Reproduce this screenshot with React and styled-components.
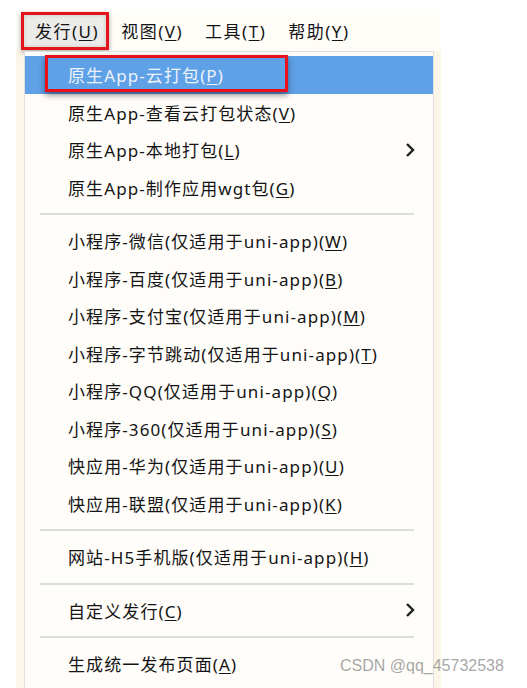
import styled, { createGlobalStyle } from "styled-components";

const GlobalStyle = createGlobalStyle`
  html, body {
    margin: 0;
    padding: 0;
    background: #ffffff;
  }
  body {
    font-family: "Noto Sans", "Noto Sans CJK SC", sans-serif;
  }
`;

const topMenus = [
  { label: "发行", key: "U", active: true },
  { label: "视图", key: "V" },
  { label: "工具", key: "T" },
  { label: "帮助", key: "Y" },
];

const groups = [
  [
    { label: "原生App-云打包", key: "P", selected: true },
    { label: "原生App-查看云打包状态", key: "V" },
    { label: "原生App-本地打包", key: "L", sub: true },
    { label: "原生App-制作应用wgt包", key: "G" },
  ],
  [
    { label: "小程序-微信(仅适用于uni-app)", key: "W" },
    { label: "小程序-百度(仅适用于uni-app)", key: "B" },
    { label: "小程序-支付宝(仅适用于uni-app)", key: "M" },
    { label: "小程序-字节跳动(仅适用于uni-app)", key: "T" },
    { label: "小程序-QQ(仅适用于uni-app)", key: "Q" },
    { label: "小程序-360(仅适用于uni-app)", key: "S" },
    { label: "快应用-华为(仅适用于uni-app)", key: "U" },
    { label: "快应用-联盟(仅适用于uni-app)", key: "K" },
  ],
  [{ label: "网站-H5手机版(仅适用于uni-app)", key: "H" }],
  [{ label: "自定义发行", key: "C", sub: true }],
  [{ label: "生成统一发布页面", key: "A" }],
];

const Chevron = () => (
  <svg width="10" height="16" viewBox="0 0 10 16">
    <polyline points="2,2 8,8 2,14" fill="none" stroke="#1e1e1e" strokeWidth="2.4" />
  </svg>
);

const App = () => {
  return (
    <>
      <GlobalStyle />
      <Page>
        <Frame>
          <MenuBar>
            {topMenus.map((m) => (
              <TopItem key={m.label} $active={m.active}>
                {m.label}(<u>{m.key}</u>)
              </TopItem>
            ))}
          </MenuBar>
          <Dropdown>
            {groups.map((group, gi) => (
              <Group key={gi}>
                {gi > 0 && <Separator />}
                {group.map((item) => (
                  <Item key={item.label} $selected={item.selected}>
                    <span>
                      {item.label}(<u>{item.key}</u>)
                    </span>
                    {item.sub && (
                      <Arrow>
                        <Chevron />
                      </Arrow>
                    )}
                    {item.selected && <Callout />}
                  </Item>
                ))}
              </Group>
            ))}
          </Dropdown>
        </Frame>
        <Watermark>CSDN @qq_45732538</Watermark>
      </Page>
    </>
  );
};

const Page = styled.div`
  position: relative;
  width: 527px;
  height: 688px;
  overflow: hidden;
  padding: 10px 0 0 16px;
  box-sizing: border-box;
`;

const Frame = styled.div`
  width: 425px;
  height: 700px;
  background: #fcf6e8;
  display: flex;
  flex-direction: column;
`;

const MenuBar = styled.div`
  height: 41px;
  background: #fffdf8;
  display: flex;
  align-items: center;
  padding-left: 5px;
  box-sizing: border-box;
`;

const TopItem = styled.div`
  font-size: 17px;
  letter-spacing: 1.5px;
  line-height: 31px;
  color: #141414;
  padding: 1px 7px 0 9px;
  border: 3px solid transparent;
  u {
    text-underline-offset: 2px;
  }
  ${(p) =>
    p.$active &&
    `
    padding: 1px 7px 0 11px;
    border-color: #e5141c;
    background: #ebebea;
    box-shadow: 0 2px 5px rgba(0,0,0,0.35), inset 0 0 4px rgba(0,0,0,0.15);
  `}
`;

const Dropdown = styled.div`
  margin-left: 8px;
  width: 410px;
  flex: 1;
  background: #fffdf9;
  border: 1px solid #e1e0dc;
  border-bottom: none;
  box-sizing: border-box;
  padding-top: 4px;
`;

const Group = styled.div`
  display: flex;
  flex-direction: column;
`;

const Separator = styled.div`
  height: 2px;
  margin: 7px 19px 7px 15px;
  background: #dcdcdc;
`;

const Item = styled.div`
  position: relative;
  height: 37.5px;
  display: flex;
  align-items: center;
  justify-content: space-between;
  padding: 0 18px 0 43px;
  font-size: 17px;
  letter-spacing: 1.1px;
  color: ${(p) => (p.$selected ? "#eef3fb" : "#141414")};
  background: ${(p) => (p.$selected ? "#5fa1e6" : "transparent")};
  white-space: nowrap;
  u {
    text-underline-offset: 2px;
  }
`;

const Arrow = styled.span`
  display: flex;
  align-items: center;
`;

const Callout = styled.div`
  position: absolute;
  left: 20px;
  top: -1px;
  width: 243px;
  height: 37px;
  border: 3px solid #e8101a;
  box-sizing: border-box;
  box-shadow: 0 3px 6px rgba(0, 0, 0, 0.45);
`;

const Watermark = styled.div`
  position: absolute;
  left: 340px;
  top: 657px;
  font-family: "Liberation Sans", Arial, sans-serif;
  font-size: 16px;
  color: rgba(150, 150, 150, 0.85);
`;

export default App;
